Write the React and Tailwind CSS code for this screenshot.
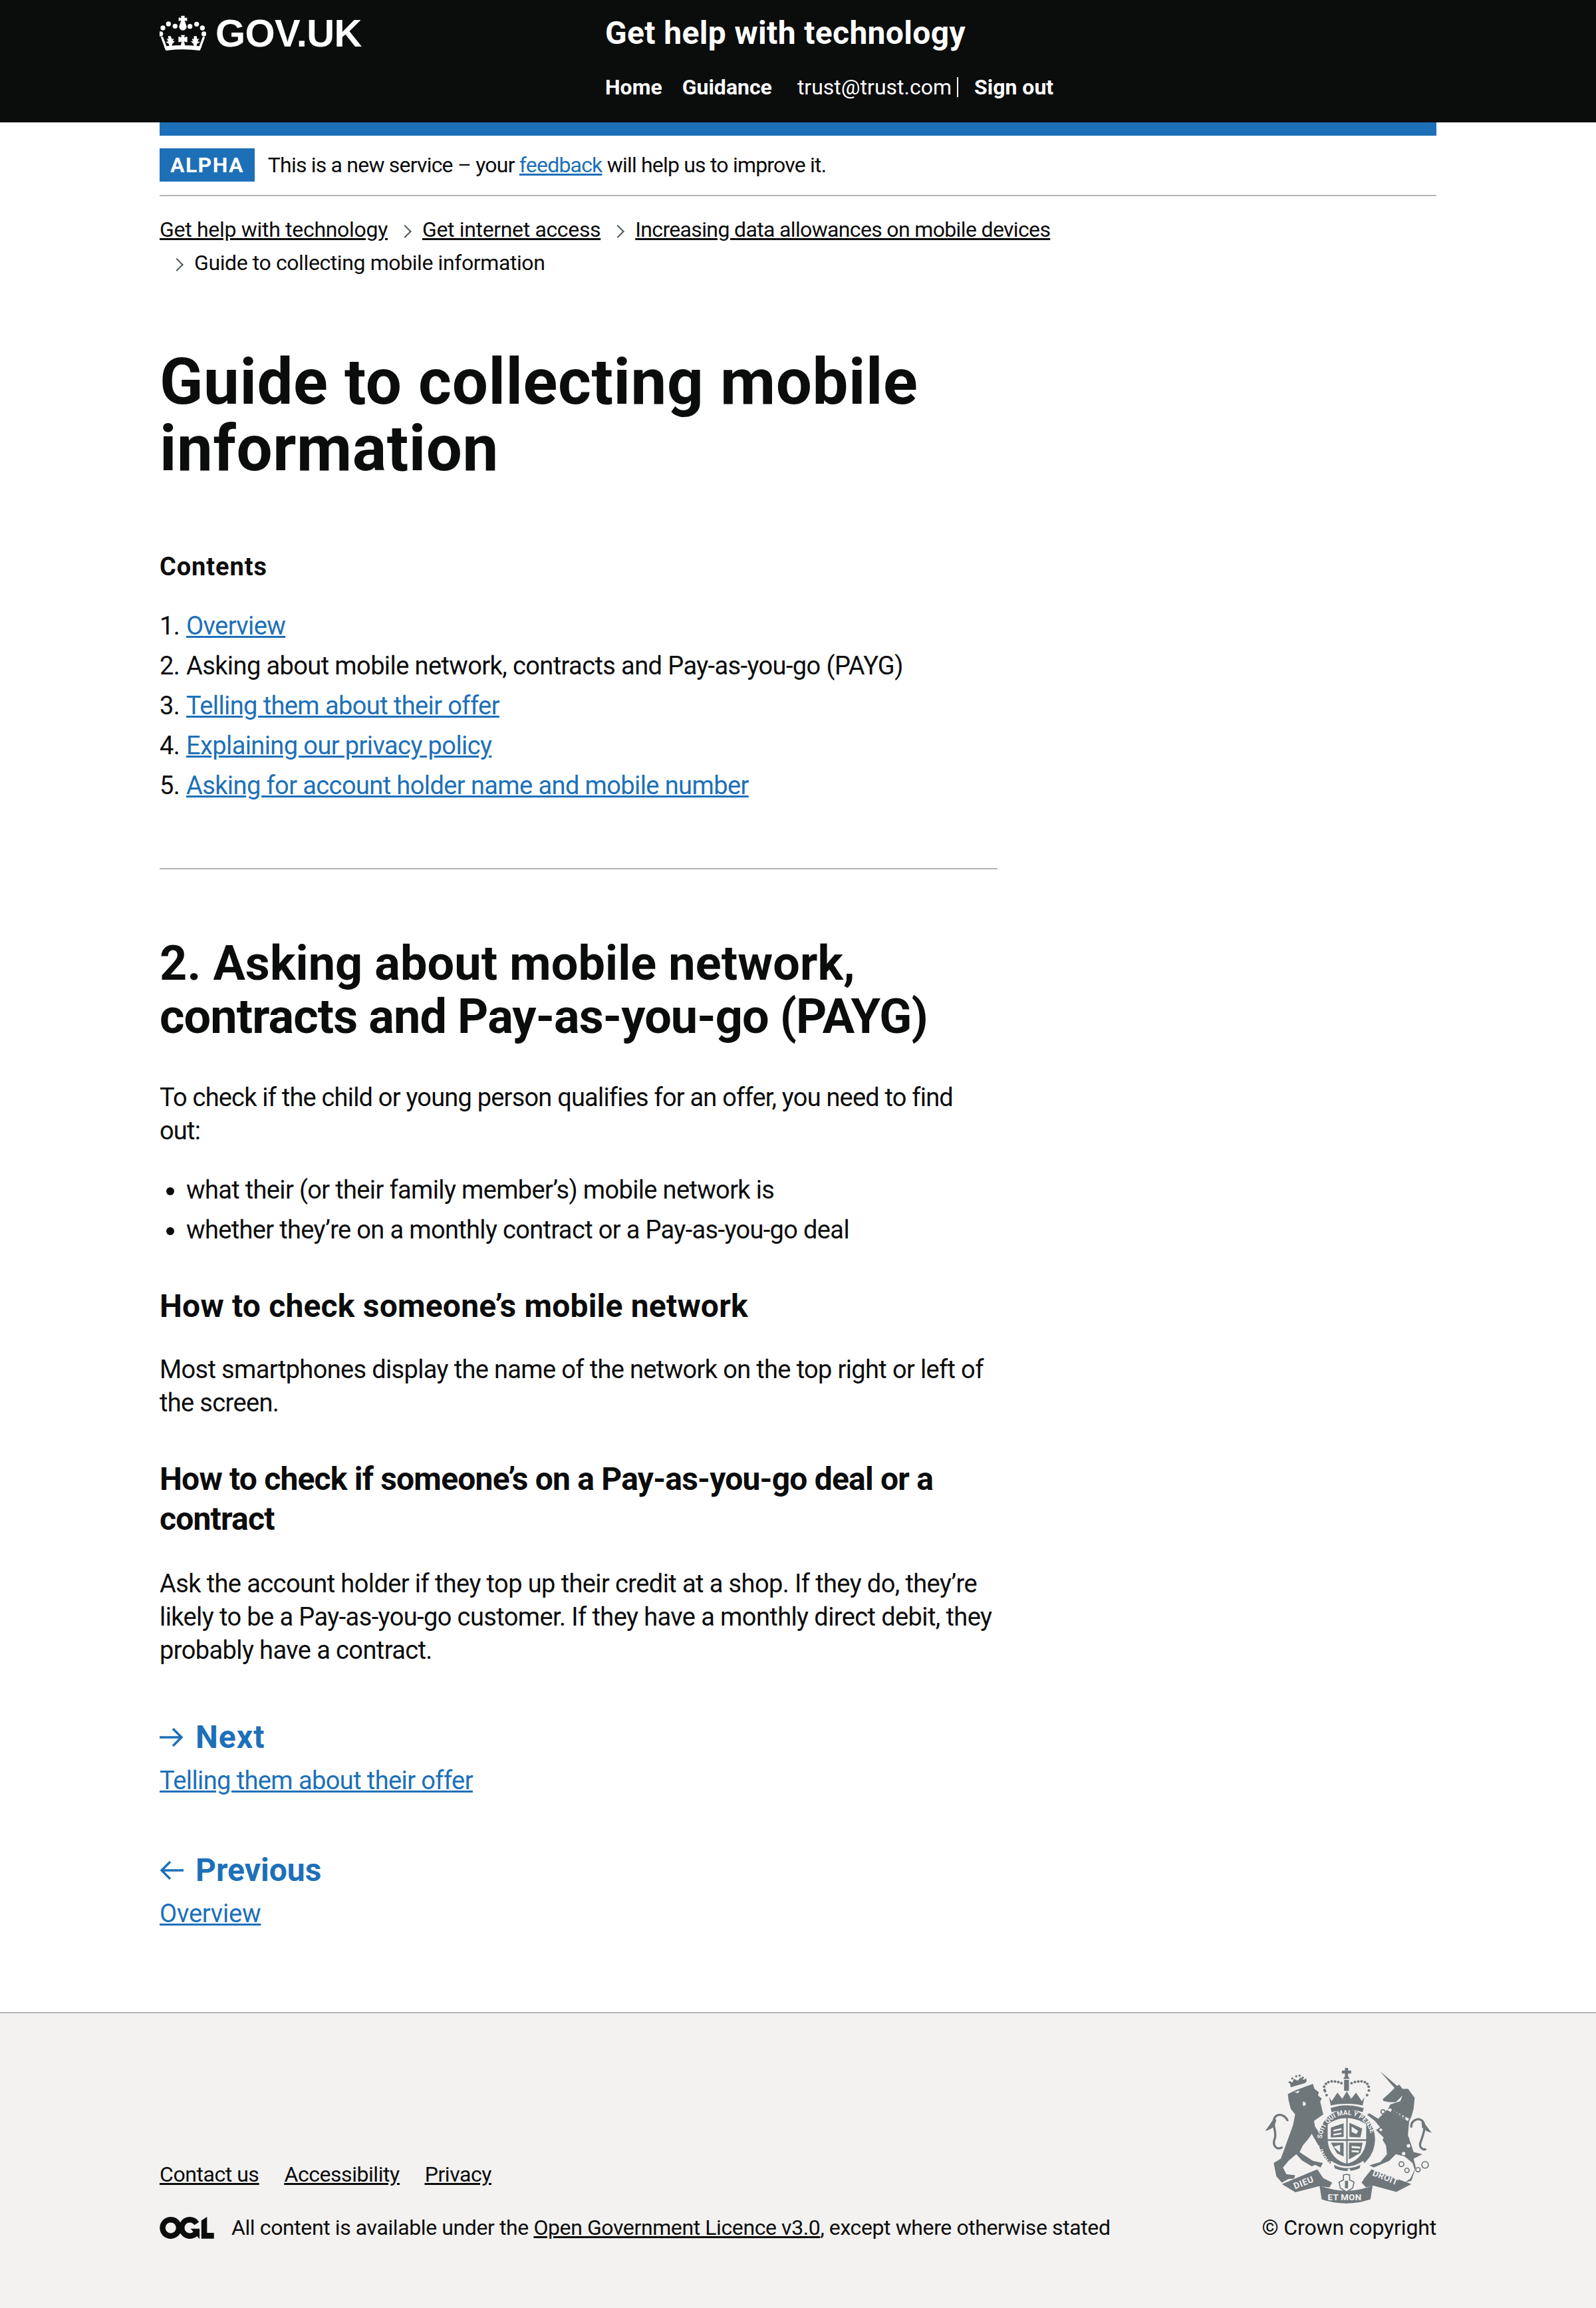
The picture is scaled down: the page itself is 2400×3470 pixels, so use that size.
const blue = "text-[#1d70b8]";
const grey = "#6f777b";
const paper = "#f3f2f1";

function Crown() {
  const dots = [[75, 77], [105, 87], [172, 88], [202, 78], [50, 95], [228, 95], [40, 122], [235, 122]];
  return (
    <svg viewBox="35 38 210 162" className="w-[70px] h-[54px] fill-white shrink-0">
      <path d="M132 40h16v11l11-3v16l-11-3 9 28a17 17 0 1 1-34 0l9-28-11 3V48l11 3z" />
      {dots.map(([cx, cy]) => <circle key={cx} cx={cx} cy={cy} r="11" />)}
      {/* cross pattee in the middle, fleurs either side */}
      <path d="M131 127h18l-3 11 14-4v26l-14-4 4 22h-20l4-22-14 4v-26l14 4z" />
      <path d="M73 132h12l6 14 8-4-4 14 10-2-12 12-4 12h-10l-3-12-14-8 12-2-8-14 9 4z" />
      <path d="M190 132h12l3 14 9-4-8 14 12 2-14 8-3 12h-10l-4-12-12-12 10 2-4-14 8 4z" />
      <path d="M55 178q85-10 170 0l-8 19q-77-11-154 0z" />
      <path d="M40 136l10-2 17 46-9 4zM240 136l-10-2-17 46 9 4z" />
    </svg>
  );
}

function Ogl() {
  return (
    <svg viewBox="0 0 483.2 195.700" className="w-[82px] h-[33px] fill-[#0b0c0c] shrink-0">
      <path d="M421.5 142.8V.1l-50.7 32.3v161.1h112.4v-50.7zm-122.3-9.6A47.12 47.12 0 0 1 221 97.8c0-26 21.1-47.1 47.1-47.1 16.7 0 31.4 8.7 39.7 21.8l42.7-27.2A97.63 97.63 0 0 0 268.1 0c-36.5 0-68.3 20.1-85.1 49.7A98 98 0 0 0 97.8 0C43.9 0 0 43.9 0 97.8s43.9 97.8 97.8 97.8c36.5 0 68.3-20.1 85.1-49.7a97.76 97.76 0 0 0 149.6 25.4l19.4 22.2h3v-87.8h-80l24.3 27.5zM97.8 145c-26 0-47.1-21.1-47.1-47.1s21.1-47.1 47.1-47.1 47.2 21 47.2 47S123.8 145 97.8 145" />
    </svg>
  );
}

function Chevron() {
  return <span className="inline-block w-[14px] h-[14px] border-t-2 border-r-2 border-[#505a5f] rotate-45 mx-[19px] mb-[1px]" />;
}

function Arrow({ left }) {
  return (
    <svg viewBox="0 0 36 30" className={`w-[36px] h-[30px] fill-none stroke-[#1d70b8] stroke-[3.5] mr-[18px] ${left ? "-scale-x-100" : ""}`}>
      <path d="M0 15h33M20 2l13 13-13 13" />
    </svg>
  );
}

function Arms() {
  const crownDots = [[398, 180], [396, 165], [400, 185], [407, 203], [404, 152], [415, 145], [430, 141], [445, 142], [460, 144], [474, 149], [520, 149], [535, 144], [550, 142], [565, 141], [580, 145], [591, 152], [597, 165], [598, 182], [590, 203]];
  const lionDots = [[240, 145], [252, 128], [270, 118], [285, 115], [300, 124], [312, 138]];
  const rings = [[745, 515, 11], [770, 543, 10], [820, 540, 10], [852, 518, 15], [662, 278, 9], [652, 360, 9]];
  return (
    <svg viewBox="125 75 760 620" className="w-[253px] h-[207px] mr-[6px]" fill={grey}>
      {/* royal crown */}
      <path d="M490 80h14v12h14v14h-14v12l8 12h-30l8-12v-12h-14V92h14z" />
      <path d="M486 134h22v50h-22z" />
      <path d="M418 212l12 18 26-38 22 28 20-34 20 34 22-28 26 38 12-18-8 38c-40-10-104-10-144 0z" />
      <path d="M425 262q72-26 150 0l-5 18q-68-22-140 0z" />
      {crownDots.map(([cx, cy]) => <circle key={`${cx}-${cy}`} cx={cx} cy={cy} r="6" />)}

      {/* lion */}
      <path d="M232 198L270 180 345 152 352 175 372 190 368 205 385 218 378 232 392 290 350 320 355 345 385 390 395 420 370 430 340 378 325 400 300 430 285 460 315 480 345 500 390 510 380 530 355 518 340 525 295 498 270 470 235 500 210 530 225 560 265 565 260 580 235 582 205 598 180 570 168 510 200 490 215 450 235 395 255 340 265 290 245 265 235 225Z" />
      <path d="M245 168l68-20 3-22-12 8-14-12-14 16-16-8-8 16-12-6z" />
      {lionDots.map(([cx, cy]) => <circle key={`${cx}-${cy}`} cx={cx} cy={cy} r="5" />)}
      <path d="M262 190l24-8-8 12zM300 232q12 0 14 12-6 12-14 6z" fill={paper} />
      <path d="M232 320C215 285 180 285 170 310 160 345 185 370 172 402 162 430 180 455 208 438" fill="none" stroke={grey} strokeWidth="10" />
      <path d="M172 305l-42 60 14-4 26-14 10-30z" />

      {/* unicorn */}
      <path d="M648 95L730 165 715 172Z" />
      <path d="M660 222L690 195 715 170 735 155 750 175 775 175 805 215 800 265 790 300 780 322 685 265 695 245 740 230 750 205 720 235 690 235 665 230Z" />
      <path d="M680 270L640 310 600 285 590 292 625 320 650 350 630 360 665 395 660 405 675 430 680 470 650 505 600 520 620 530 690 500 720 470 760 480 795 510 805 540 785 580 760 598 790 590 810 530 800 490 840 470 800 460 780 400 775 375 780 322Z" />
      <path d="M692 262l88 48-6 10-88-48z" fill={paper} />
      <path d="M700 272l6-14 6 18 8-12 4 20 10-12 2 22 12-12 2 22 12-10 2 20-68-34z" />
      <circle cx="777" cy="432" r="8" fill={paper} />
      <circle cx="755" cy="467" r="8" fill={paper} />
      <circle cx="785" cy="385" r="10" fill={paper} />
      <path d="M790 350C785 320 820 300 840 320 860 345 840 390 830 420 825 445 850 455 856 445" fill="none" stroke={grey} strokeWidth="10" />
      <path d="M835 312l47 62-22-8-22-16z" />
      {rings.map(([cx, cy, r]) => <circle key={cx} cx={cx} cy={cy} r={r} fill={paper} stroke={grey} strokeWidth="5" />)}

      {/* garter and shield */}
      <ellipse cx="498" cy="403" rx="128" ry="136" />
      <path d="M412 335c25-18 55-28 84-28v205c-50-12-84-60-84-110zM586 335c-25-18-55-28-84-28v205c50-12 84-60 84-110z" fill={paper} />
      <path d="M410 402h178v8H410z" />
      <path d="M426 350l58-20v62l-58 2zM510 328l58 26-8 40-50-2zM426 418l58 0v62l-30-14zM508 418h62l-10 46-52 30z" />
      <path d="M438 360l36-8v8l-36 8zM438 378l36-6v8l-36 6zM438 436l30-8v34zM520 432l40 4-2 8-38-2zM520 452l34 2-2 8-32-2zM520 345l30 20-8 14-22-10z" fill={paper} />
      <path d="M428 500q70 50 145 0l8 24q-80 42-160 0z" fill={paper} />
      <path d="M440 518q60 30 120 0l-4 16q-55 24-112 0z" />
      <circle cx="508" cy="541" r="6" fill={paper} />
      <defs>
        <path id="garter-top" d="M386 400a112 116 0 0 1 224 16" />
        <path id="garter-left" d="M425 505A118 118 0 0 1 386 425" />
      </defs>
      <g fill={paper} fontFamily="Roboto, sans-serif" fontWeight="700" fontSize="30">
        <text><textPath href="#garter-top">SOIT QUI MAL Y PENSE</textPath></text>
        <text><textPath href="#garter-left">HONI</textPath></text>
      </g>

      {/* motto scrolls */}
      <path d="M205 605L365 538 392 578 432 598 420 620 374 614 266 642Z" />
      <path d="M790 605L610 538 578 578 565 598 585 620 618 612 722 640Z" />
      <path d="M375 612q122 46 240 0l-10 62q-110 36-220 0z" />
      <path d="M497 560l14 4v22l20 10-6 26-28 18-28-18-6-26 20-10v-22z" fill={paper} stroke={grey} strokeWidth="5" />
      <path d="M490 590h14v34h-14z" />
      <g fill={paper} fontFamily="Roboto, sans-serif" fontWeight="700" fontSize="40">
        <text x="412" y="678" letterSpacing="1">ET MON</text>
        <text x="265" y="628" transform="rotate(-22 265 628)" letterSpacing="2">DIEU</text>
        <text x="612" y="565" transform="rotate(22 612 565)" letterSpacing="1">DROIT</text>
      </g>
    </svg>
  );
}

export default function App() {
  const prose = "text-[38px] leading-[50px] text-[#0b0c0c]";
  const contents = ["Overview", "Asking about mobile network, contracts and Pay-as-you-go (PAYG)", "Telling them about their offer", "Explaining our privacy policy", "Asking for account holder name and mobile number"];

  return (
    <div className="min-h-[3470px] flex flex-col font-['Roboto',sans-serif] bg-white text-[#0b0c0c]">
      <header className="bg-[#0b0c0c] h-[184px] px-[240px] flex text-white shrink-0">
        <div className="w-[670px] h-[100px] flex items-center gap-[14px] shrink-0">
          <Crown />
          <span className="font-['Liberation_Sans',sans-serif] text-[58px] font-bold leading-none tracking-[-0.6px]">GOV.UK</span>
        </div>
        <div>
          <div className="text-[48px] leading-[60px] font-bold pt-[20px] tracking-[0.35px]">Get help with technology</div>
          <nav className="flex items-center text-[32px] leading-[40px] mt-[31px]">
            <a className="font-bold mr-[30px]">Home</a>
            <a className="font-bold mr-[38px]">Guidance</a>
            <span>trust@trust.com</span>
            <span className="w-[2px] h-[30px] bg-white ml-[8px] mr-[24px]" />
            <a className="font-bold">Sign out</a>
          </nav>
        </div>
      </header>

      <div className="mx-[240px]">
        <div className="h-[20px] bg-[#1d70b8]" />
        <div className="flex items-center h-[91px] border-b-2 border-[#b1b4b6] pb-[2px]">
          <strong className="bg-[#1d70b8] text-white text-[32px] leading-[50px] h-[50px] px-[16px] tracking-[1.4px]">ALPHA</strong>
          <span className="ml-[20px] text-[32px] leading-[40px] tracking-[-0.8px]">This is a new service – your <a className={`${blue} underline`}>feedback</a> will help us to improve it.</span>
        </div>

        <div className="text-[32px] leading-[50px] mt-[25px]">
          <a className="underline tracking-[-0.3px]">Get help with technology</a><Chevron />
          <a className="underline tracking-[-0.35px]">Get internet access</a><Chevron />
          <a className="underline tracking-[-0.65px]">Increasing data allowances on mobile devices</a>
          <div><Chevron /><span className="tracking-[-0.4px]">Guide to collecting mobile information</span></div>
        </div>

        <main className="w-[1260px]">
          <h1 className="text-[96px] leading-[100px] font-bold mt-[104px] tracking-[0.6px]">Guide to collecting mobile information</h1>

          <h2 className="text-[38px] leading-[50px] font-bold mt-[103px] tracking-[0.9px]">Contents</h2>
          <ol className="mt-[34px]">
            {contents.map((item, i) => (
              <li key={item} className="flex text-[38px] leading-[60px] tracking-[-0.6px]">
                <span className="w-[40px]">{i + 1}.</span>
                {i === 1 ? <span>{item}</span> : <a className={`${blue} underline`}>{item}</a>}
              </li>
            ))}
          </ol>
          <hr className="border-0 h-[2px] bg-[#b1b4b6] mt-[94px]" />

          <h2 className="text-[72px] leading-[80px] font-bold mt-[102px]">
            <span className="tracking-[0.1px]">2. Asking about mobile network,</span>{" "}
            <span className="tracking-[-0.9px]">contracts and Pay-as-you-go (PAYG)</span>
          </h2>
          <p className={`${prose} mt-[56px] tracking-[-0.8px]`}>To check if the child or young person qualifies for an offer, you need to find out:</p>
          <ul className="mt-[34px] list-disc pl-[40px] text-[38px] leading-[60px] tracking-[-0.65px]">
            <li>what their (or their family member’s) mobile network is</li>
            <li>whether they’re on a monthly contract or a Pay-as-you-go deal</li>
          </ul>
          <h3 className="text-[48px] leading-[60px] font-bold mt-[55px] tracking-[0.2px]">How to check someone’s mobile network</h3>
          <p className={`${prose} mt-[40px] tracking-[-0.65px]`}>Most smartphones display the name of the network on the top right or left of the screen.</p>
          <h3 className="text-[48px] leading-[60px] font-bold mt-[60px] tracking-[-0.8px]">How to check if someone’s on a Pay-as-you-go deal or a contract</h3>
          <p className={`${prose} mt-[42px] tracking-[-0.6px]`}>Ask the account holder if they top up their credit at a shop. If they do, they’re likely to be a Pay-as-you-go customer. If they have a monthly direct debit, they probably have a contract.</p>

          <div className="mt-[76px]">
            <div className={`flex items-center text-[48px] leading-[60px] font-bold tracking-[1px] ${blue}`}><Arrow />Next</div>
            <a className={`${blue} underline text-[38px] leading-[50px] block mt-[10px] tracking-[-0.6px]`}>Telling them about their offer</a>
          </div>
          <div className="mt-[80px]">
            <div className={`flex items-center text-[48px] leading-[60px] font-bold ${blue}`}><Arrow left />Previous</div>
            <a className={`${blue} underline text-[38px] leading-[50px] block mt-[10px] tracking-[-0.2px]`}>Overview</a>
          </div>
        </main>
      </div>

      <footer className="mt-auto h-[445px] bg-[#f3f2f1] border-t-2 border-[#b1b4b6] px-[240px] flex justify-between items-end pb-[101px] text-[32px] leading-[40px]">
        <div>
          <div className="flex gap-[38px] underline tracking-[-0.45px]"><a>Contact us</a><a>Accessibility</a><a>Privacy</a></div>
          <div className="flex items-center mt-[40px]">
            <span className="w-[108px] shrink-0"><Ogl /></span>
            <span className="tracking-[-0.4px]">All content is available under the <a className="underline">Open Government Licence v3.0</a>, except where otherwise stated</span>
          </div>
        </div>
        <div className="flex flex-col items-end">
          <Arms />
          <span className="mt-[15px] tracking-[-0.15px]">© Crown copyright</span>
        </div>
      </footer>
    </div>
  );
}
